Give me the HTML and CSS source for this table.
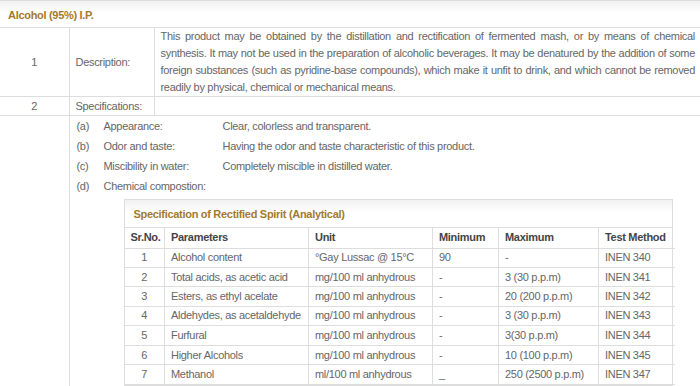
FILE: index.html
```html
<!DOCTYPE html>
<html lang="en">
<head>
    <meta charset="UTF-8">
    <meta name="viewport" content="width=device-width, initial-scale=1.0">
    <title>Alcohol (95%) I.P.</title>
    <link rel="stylesheet" href="styles.css">
</head>
<body>
    <div class="panel">
        <div class="panel-heading">Alcohol (95%) I.P.</div>

        <table class="spec">
            <colgroup>
                <col class="s-num">
                <col class="s-label">
                <col>
            </colgroup>
            <tr>
                <td class="num">1</td>
                <td class="label">Description:</td>
                <td class="desc">This product may be obtained by the distillation and rectification of fermented mash, or by means of chemical synthesis. It may not be used in the preparation of alcoholic beverages. It may be denatured by the addition of some foreign substances (such as pyridine-base compounds), which make it unfit to drink, and which cannot be removed readily by physical, chemical or mechanical means.</td>
            </tr>
            <tr>
                <td class="num">2</td>
                <td class="label">Specifications:</td>
                <td></td>
            </tr>
            <tr>
                <td class="num"></td>
                <td class="details" colspan="2">
                    <div class="props">
                        <span>(a)</span><span>Appearance:</span><span>Clear, colorless and transparent.</span>
                        <span>(b)</span><span>Odor and taste:</span><span>Having the odor and taste characteristic of this product.</span>
                        <span>(c)</span><span>Miscibility in water:</span><span>Completely miscible in distilled water.</span>
                        <span>(d)</span><span>Chemical compostion:</span><span></span>
                    </div>

                    <div class="panel inner">
                        <div class="panel-heading">Specification of Rectified Spirit (Analytical)</div>
                        <table class="analysis">
                            <colgroup>
                                <col class="c-no">
                                <col class="c-param">
                                <col class="c-unit">
                                <col class="c-min">
                                <col class="c-max">
                                <col class="c-test">
                            </colgroup>
                            <thead>
                                <tr>
                                    <th class="center">Sr.No.</th>
                                    <th>Parameters</th>
                                    <th>Unit</th>
                                    <th>Minimum</th>
                                    <th>Maximum</th>
                                    <th>Test Method</th>
                                </tr>
                            </thead>
                            <tbody>
                                <tr><td class="center">1</td><td>Alcohol content</td><td>°Gay Lussac @ 15°C</td><td>90</td><td>-</td><td>INEN 340</td></tr>
                                <tr><td class="center">2</td><td>Total acids, as acetic acid</td><td>mg/100 ml anhydrous</td><td>-</td><td>3 (30 p.p.m)</td><td>INEN 341</td></tr>
                                <tr><td class="center">3</td><td>Esters, as ethyl acelate</td><td>mg/100 ml anhydrous</td><td>-</td><td>20 (200 p.p.m)</td><td>INEN 342</td></tr>
                                <tr><td class="center">4</td><td>Aldehydes, as acetaldehyde</td><td>mg/100 ml anhydrous</td><td>-</td><td>3 (30 p.p.m)</td><td>INEN 343</td></tr>
                                <tr><td class="center">5</td><td>Furfural</td><td>mg/100 ml anhydrous</td><td>-</td><td>3(30 p.p.m)</td><td>INEN 344</td></tr>
                                <tr><td class="center">6</td><td>Higher Alcohols</td><td>mg/100 ml anhydrous</td><td>-</td><td>10 (100 p.p.m)</td><td>INEN 345</td></tr>
                                <tr><td class="center">7</td><td>Methanol</td><td>ml/100 ml anhydrous</td><td>_</td><td>250 (2500 p.p.m)</td><td>INEN 347</td></tr>
                            </tbody>
                        </table>
                    </div>
                </td>
            </tr>
        </table>
    </div>
</body>
</html>
```

FILE: styles.css
```css
* {
    margin: 0;
    padding: 0;
    box-sizing: border-box;
}

body {
    font-family: 'Liberation Sans', Arial, sans-serif;
    font-size: 11px;
    letter-spacing: -0.3px;
    color: #666;
    background: #fff;
}

.panel {
    border-top: 1px solid #ddd;
}

.panel-heading {
    height: 27px;
    padding: 0 8px;
    line-height: 28px;
    font-weight: bold;
    color: #a37a2c;
    background: linear-gradient(#f1f1f1, #fff 45%);
    border-bottom: 1px solid #ddd;
}

table {
    width: 100%;
    border-collapse: collapse;
    table-layout: fixed;
}

.s-num { width: 69px; }
.s-label { width: 85px; }

.spec td {
    vertical-align: middle;
    line-height: 17px;
}

.spec tr + tr td {
    border-top: 1px solid #ddd;
}

.spec .num {
    text-align: center;
    border-right: 1px solid #ddd;
}

.spec .label {
    padding-left: 6px;
    border-right: 1px solid #ddd;
}

.spec .desc {
    padding: 0 5px 0 6px;
    text-align: justify;
}

.spec tr:nth-child(2) td {
    height: 19px;
}

.spec .details {
    vertical-align: top;
    padding: 0 27px 0 7px;
}

.props {
    display: grid;
    grid-template-columns: 27px 119px 1fr;
    grid-auto-rows: 20px;
    align-items: center;
}

.inner {
    margin: 3px 0 0 47px;
    border: 1px solid #ddd;
}

.inner .panel-heading {
    height: 28px;
    line-height: 28px;
    padding: 0 9px;
}

.analysis th,
.analysis td {
    height: 19.6px;
    padding: 0 6px;
    text-align: left;
    white-space: nowrap;
    overflow: hidden;
    border: 1px solid #ddd;
    line-height: 17px;
}

.analysis tr > :first-child {
    border-left: none;
}

.analysis tr > :last-child {
    border-right: none;
}

.analysis th {
    height: 20px;
    color: #444;
    font-weight: bold;
    border-top: none;
}

.analysis .center {
    text-align: center;
}

.c-no { width: 40px; }
.c-param { width: 144px; }
.c-unit { width: 124px; }
.c-min { width: 66px; }
.c-max { width: 100px; }
.c-test { width: 76px; }
```
